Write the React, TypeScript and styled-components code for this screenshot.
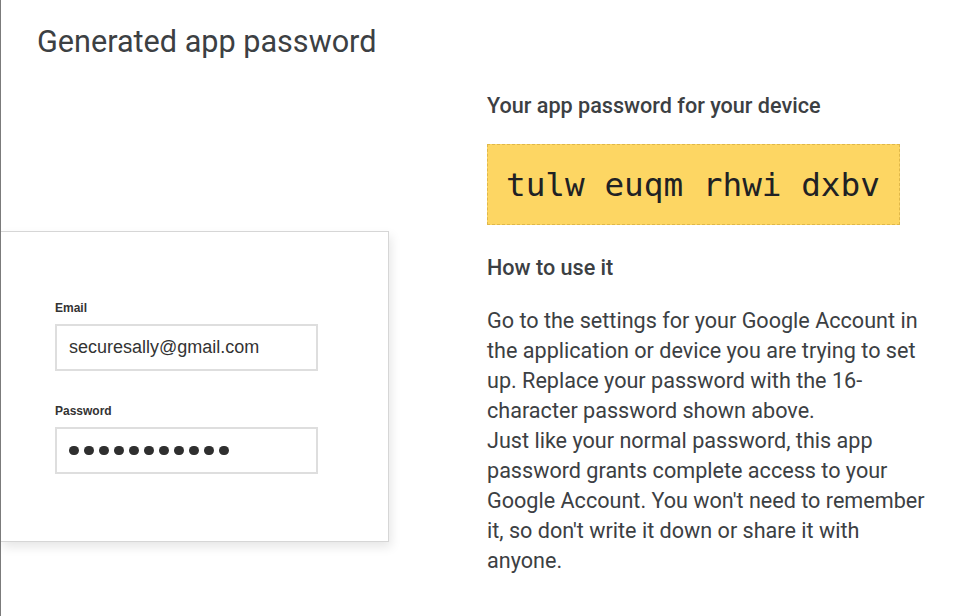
import React from "react";
import styled, { createGlobalStyle } from "styled-components";

const GlobalStyle = createGlobalStyle`
  html, body {
    margin: 0;
    padding: 0;
    background: #fff;
  }
  body {
    font-family: Roboto, "Noto Sans", Arial, sans-serif;
    color: #3c4043;
  }
`;

const Page = styled.div`
  min-height: 616px;
  border-left: 1px solid #7b7b7b;
  box-sizing: border-box;
  overflow: hidden;
`;

const Title = styled.h1`
  margin: 0;
  padding: 25px 0 0 36px;
  font-size: 30.6px;
  line-height: 34px;
  font-weight: 400;
  color: #3c4043;
`;

const Columns = styled.div`
  display: grid;
  grid-template-columns: 486px 444px;
`;

const Illustration = styled.div`
  padding-top: 172px;
`;

const Card = styled.div`
  width: 388px;
  height: 311px;
  box-sizing: border-box;
  border: 1px solid #d6d6d6;
  border-left: none;
  background: #fff;
  box-shadow: 2px 5px 10px rgba(0, 0, 0, 0.1);
  padding: 69px 0 0 54px;
  font-family: "Liberation Sans", Arial, sans-serif;
`;

const FieldLabel = styled.div`
  font-size: 12px;
  line-height: 14px;
  font-weight: 700;
  color: #333;
  margin-bottom: 9px;
`;

const Field = styled.div<{ $gap?: number }>`
  width: 263px;
  height: 47px;
  box-sizing: border-box;
  border: 2px solid #dedede;
  display: flex;
  align-items: center;
  gap: 5.5px;
  padding-left: 12px;
  font-size: 18px;
  color: #333;
  margin-bottom: ${(p) => p.$gap ?? 0}px;
`;

const Dot = styled.span`
  width: 9.5px;
  height: 9.5px;
  border-radius: 50%;
  background: #2f2f2f;
`;

const Info = styled.div`
  padding-top: 33px;
`;

const Heading = styled.h2`
  margin: 0;
  font-size: 21.6px;
  line-height: 28px;
  font-weight: 500;
  color: #3c4043;
`;

const PasswordBox = styled.div`
  margin: 24px 0 29px;
  width: 413px;
  height: 81px;
  box-sizing: border-box;
  border: 1px dashed #e0b84a;
  background: #fdd663;
  display: flex;
  align-items: center;
  padding-left: 18px;
  font-family: "DejaVu Sans Mono", "Liberation Mono", monospace;
  font-size: 32.7px;
  color: #202124;
  white-space: pre;
`;

const Paragraph = styled.p`
  margin: 24px 0 0;
  font-size: 21.6px;
  line-height: 30px;
  color: #3c4043;
`;

export default function App() {
  const dots = Array.from({ length: 11 });
  return (
    <>
      <GlobalStyle />
      <Page>
        <Title>Generated app password</Title>
        <Columns>
          <Illustration>
            <Card>
              <FieldLabel>Email</FieldLabel>
              <Field $gap={33}>securesally@gmail.com</Field>
              <FieldLabel>Password</FieldLabel>
              <Field>
                {dots.map((_, i) => (
                  <Dot key={i} />
                ))}
              </Field>
            </Card>
          </Illustration>
          <Info>
            <Heading>Your app password for your device</Heading>
            <PasswordBox>tulw euqm rhwi dxbv</PasswordBox>
            <Heading>How to use it</Heading>
            <Paragraph>
              Go to the settings for your Google Account in the application or
              device you are trying to set up. Replace your password with the
              16-character password shown above.
              <br />
              Just like your normal password, this app password grants complete
              access to your Google Account. You won't need to remember it, so
              don't write it down or share it with anyone.
            </Paragraph>
          </Info>
        </Columns>
      </Page>
    </>
  );
}
